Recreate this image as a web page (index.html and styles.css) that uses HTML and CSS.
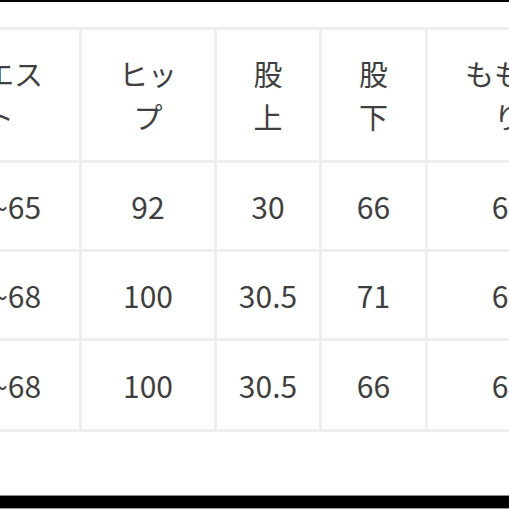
FILE: index.html
```html
<!DOCTYPE html>
<html lang="ja">
<head>
<meta charset="utf-8">
<link rel="stylesheet" href="styles.css">
</head>
<body>
<div class="page">
  <div class="bar-top"></div>
  <div class="stage">
    <div class="grid">
      <div class="cell head">ウエス<br>ト</div>
      <div class="cell head">ヒッ<br>プ</div>
      <div class="cell head">股<br>上</div>
      <div class="cell head">股<br>下</div>
      <div class="cell head">もも周<br>り</div>

      <div class="cell">60~65</div>
      <div class="cell">92</div>
      <div class="cell">30</div>
      <div class="cell">66</div>
      <div class="cell">60</div>

      <div class="cell">64~68</div>
      <div class="cell">100</div>
      <div class="cell">30.5</div>
      <div class="cell">71</div>
      <div class="cell">64</div>

      <div class="cell">64~68</div>
      <div class="cell">100</div>
      <div class="cell">30.5</div>
      <div class="cell">66</div>
      <div class="cell">64</div>
    </div>
  </div>
  <div class="bar-bottom"></div>
</div>
</body>
</html>
```

FILE: styles.css
```css
html, body {
  margin: 0;
  padding: 0;
  background: #ffffff;
}
.page {
  width: 509px;
  height: 509px;
  overflow: hidden;
  display: flex;
  flex-direction: column;
  font-family: "Noto Sans CJK JP", "Noto Sans", sans-serif;
  color: #3f3f3f;
}
.bar-top {
  height: 2px;
  background: #000;
  flex-shrink: 0;
}
.stage {
  display: flex;
  justify-content: center;
  margin-top: 25px;
  flex-shrink: 0;
}
.grid {
  flex-shrink: 0;
  display: grid;
  grid-template-columns: 159px 132px 102px 103px 161px;
  grid-template-rows: 130px 86px 86px 88px;
  gap: 3px;
  padding: 3px;
  background: #eeeeee;
}
.cell {
  background: #ffffff;
  display: flex;
  align-items: center;
  justify-content: center;
  text-align: center;
  font-size: 30px;
  line-height: 43px;
  white-space: nowrap;
}
.head {
  font-size: 29px;
}
.bar-bottom {
  margin-top: auto;
  height: 12px;
  background: #000;
  border-top: 1px solid #8a8a8a;
  border-bottom: 1px solid #9a9a9a;
  flex-shrink: 0;
}
```
